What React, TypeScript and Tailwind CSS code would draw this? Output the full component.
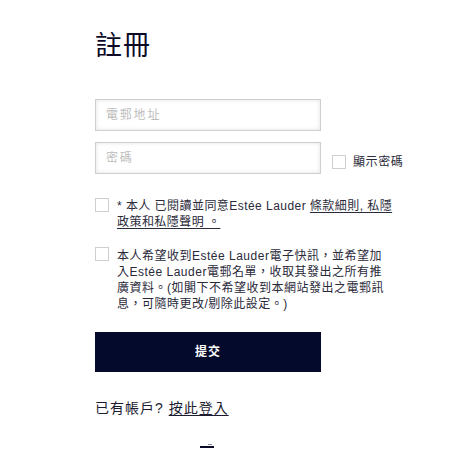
import React from "react";

const font = "font-['Liberation_Sans','Noto_Sans_CJK_TC',sans-serif]";

function Box() {
  return <div className="w-[14px] h-[14px] shrink-0 border border-[#cfcfcf] bg-white" />;
}

export default function App() {
  return (
    <div className={`w-[469px] h-[453px] overflow-hidden bg-white ${font} text-[#1c1c30]`}>
      <div className="pl-[95px] pt-[30px]">
        <h1 className="text-[27px] leading-[32px] font-normal text-[#0b0b28] tracking-[1px]">註冊</h1>

        <div className="mt-[37px] w-[226px] h-[32px] border border-[#cfcfcf] shadow-[inset_0_0_4px_rgba(0,0,0,0.12)] flex items-center pl-[10px] text-[12px] tracking-[1.8px] text-[#bdbdbd]">
          電郵地址
        </div>

        <div className="mt-[11px] flex items-center">
          <div className="w-[226px] h-[32px] border border-[#cfcfcf] shadow-[inset_0_0_4px_rgba(0,0,0,0.12)] flex items-center pl-[10px] text-[12px] tracking-[1.8px] text-[#bdbdbd]">
            密碼
          </div>
          <div className="ml-[11px] mt-[7px] flex items-center">
            <Box />
            <span className="ml-[7px] text-[12px] tracking-[0.6px] text-[#2a2a3a]">顯示密碼</span>
          </div>
        </div>

        <div className="mt-[23px] flex items-start">
          <div className="mt-[1px]"><Box /></div>
          <div className="ml-[8px] text-[12px] leading-[16px] text-[#2a2a3a] tracking-[0.45px] pt-[1px]">
            <div>
              * 本人 已閱讀並同意Estée Lauder <span className="underline underline-offset-2">條款細則, 私隱</span>
            </div>
            <div>
              <span className="underline underline-offset-2">政策和私隱聲明 。</span>
            </div>
          </div>
        </div>

        <div className="mt-[17px] flex items-start">
          <div className="mt-[0px]"><Box /></div>
          <div className="ml-[8px] text-[12px] leading-[16px] text-[#2a2a3a] tracking-[0.5px] pt-[1px]">
            <div>本人希望收到Estée Lauder電子快訊，並希望加</div>
            <div>入Estée Lauder電郵名單，收取其發出之所有推</div>
            <div>廣資料。(如閣下不希望收到本網站發出之電郵訊</div>
            <div>息，可隨時更改/剔除此設定。)</div>
          </div>
        </div>

        <button className="mt-[20px] w-[226px] h-[40px] bg-[#040a2b] text-white text-[12px] font-bold tracking-[1px] flex items-center justify-center">
          提交
        </button>

        <div className="mt-[27px] text-[14px] leading-[18px] text-[#1c1c30] tracking-[1px]">
          已有帳戶? <span className="underline underline-offset-2">按此登入</span>
        </div>

        <div className="mt-[27px] ml-[105px] flex flex-col items-start">
          <div className="ml-[8px] w-[4px] h-[1px] bg-[#8a8aa0]" />
          <div className="mt-[1px] w-[14px] h-[2px] bg-[#0b0b28]" />
        </div>
      </div>
    </div>
  );
}
